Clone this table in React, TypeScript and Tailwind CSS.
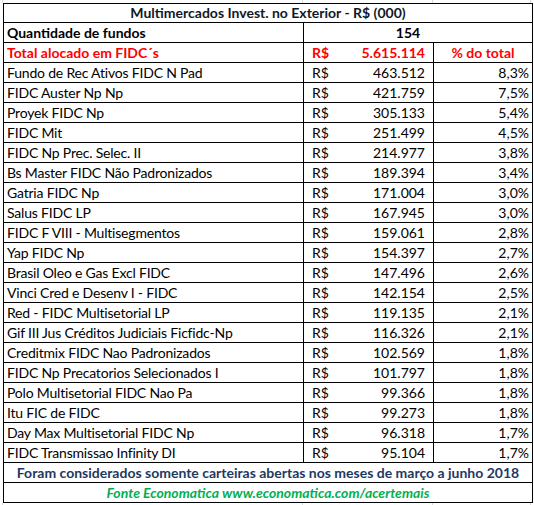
import React from 'react';

const rows: [string, string, string][] = [
  ['Fundo de Rec Ativos FIDC N Pad', '463.512', '8,3%'],
  ['FIDC Auster Np Np', '421.759', '7,5%'],
  ['Proyek FIDC Np', '305.133', '5,4%'],
  ['FIDC Mit', '251.499', '4,5%'],
  ['FIDC Np Prec. Selec. II', '214.977', '3,8%'],
  ['Bs Master FIDC Não Padronizados', '189.394', '3,4%'],
  ['Gatria FIDC Np', '171.004', '3,0%'],
  ['Salus FIDC LP', '167.945', '3,0%'],
  ['FIDC F VIII - Multisegmentos', '159.061', '2,8%'],
  ['Yap FIDC Np', '154.397', '2,7%'],
  ['Brasil Oleo e Gas Excl FIDC', '147.496', '2,6%'],
  ['Vinci Cred e Desenv I - FIDC', '142.154', '2,5%'],
  ['Red - FIDC Multisetorial LP', '119.135', '2,1%'],
  ['Gif III Jus Créditos Judiciais Ficfidc-Np', '116.326', '2,1%'],
  ['Creditmix FIDC Nao Padronizados', '102.569', '1,8%'],
  ['FIDC Np Precatorios Selecionados I', '101.797', '1,8%'],
  ['Polo Multisetorial FIDC Nao Pa', '99.366', '1,8%'],
  ['Itu FIC de FIDC', '99.273', '1,8%'],
  ['Day Max Multisetorial FIDC Np', '96.318', '1,7%'],
  ['FIDC Transmissao Infinity DI', '95.104', '1,7%'],
];

const cell = 'border border-black p-0 leading-none';

// faint excel gridline strip shown above and below the table
const Gridstrip = () => (
  <div className="flex h-[3px]">
    <div className="w-[3px] border-r border-[#d9d9d9]" />
    <div className="w-[300px] border-r border-[#d9d9d9]" />
    <div className="w-[130px] border-r border-[#d9d9d9]" />
    <div className="w-[98px] border-r border-[#d9d9d9]" />
  </div>
);

export default function App() {
  return (
    <div className="w-[534px] h-[505px] bg-white font-['Lato',sans-serif] text-[14px] text-black">
      <Gridstrip />
      <div className="pl-[3px]">
        <table className="border-collapse table-fixed w-[529px]">
          <colgroup>
            <col className="w-[300px]" />
            <col className="w-[130px]" />
            <col className="w-[99px]" />
          </colgroup>
          <tbody>
            <tr className="h-[19px]">
              <td colSpan={3} className={`${cell} text-center font-bold text-[#111827]`}>
                Multimercados Invest. no Exterior - R$ (000)
              </td>
            </tr>
            <tr className="h-[20px]">
              <td className={`${cell} pl-[3px] font-bold`}>Quantidade de fundos</td>
              <td colSpan={2} className={`${cell} text-center font-bold pr-[20px]`}>154</td>
            </tr>
            <tr className="h-[20px] text-[#ff0000] font-bold">
              <td className={`${cell} pl-[3px]`}>Total alocado em FIDC´s</td>
              <td className={cell}>
                <div className="flex justify-between px-[8px]">
                  <span>R$</span>
                  <span>5.615.114</span>
                </div>
              </td>
              <td className={`${cell} text-center`}>% do total</td>
            </tr>
            {rows.map(([name, value, pct]) => (
              <tr key={name} className="h-[20px]">
                <td className={`${cell} pl-[3px] whitespace-nowrap tracking-[-0.2px]`}>{name}</td>
                <td className={cell}>
                  <div className="flex justify-between px-[8px]">
                    <span>R$</span>
                    <span>{value}</span>
                  </div>
                </td>
                <td className={`${cell} text-right pr-[3px]`}>{pct}</td>
              </tr>
            ))}
            <tr className="h-[20px]">
              <td colSpan={3} className={`${cell} text-center font-bold text-[#1f3864]`}>
                Foram considerados somente carteiras abertas nos meses de março a junho 2018
              </td>
            </tr>
            <tr className="h-[20px]">
              <td colSpan={3} className={`${cell} text-center font-bold italic text-[#00b050]`}>
                Fonte Economatica www.economatica.com/acertemais
              </td>
            </tr>
          </tbody>
        </table>
      </div>
      <Gridstrip />
    </div>
  );
}
